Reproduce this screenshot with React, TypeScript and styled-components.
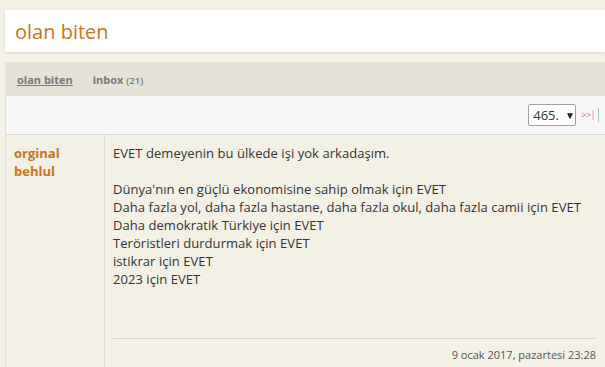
import React from 'react';
import styled, { createGlobalStyle } from 'styled-components';

const Global = createGlobalStyle`
  html, body {
    margin: 0;
    padding: 0;
    background: #f3f0e6;
    font-family: 'Open Sans', 'Liberation Sans', sans-serif;
    overflow: hidden;
  }
`;

const Page = styled.div`
  padding: 10px 0 0 5px;
`;

const Header = styled.div`
  height: 42px;
  background: #fff;
  box-shadow: 0 1px 2px rgba(0, 0, 0, 0.1);
  display: flex;
  align-items: center;
  padding-left: 10px;
  h1 {
    margin: 0;
    font-size: 20px;
    font-weight: 400;
    color: #d0701e;
  }
`;

const Tabs = styled.div`
  margin-top: 10px;
  height: 34px;
  background: #e5e2d7;
  display: flex;
  align-items: center;
  gap: 20px;
  padding-left: 12px;
`;

const Tab = styled.a<{ $active?: boolean }>`
  font-size: 11px;
  font-weight: 700;
  color: #7a7a7a;
  text-decoration: ${({ $active }) => ($active ? 'underline' : 'none')};
  small {
    font-size: 9.5px;
    font-weight: 600;
  }
`;

const Toolbar = styled.div`
  height: 38px;
  background: #f7f7f7;
  border-left: 1px solid #ddd;
  border-bottom: 1px solid #ddd;
  display: flex;
  align-items: center;
  justify-content: flex-end;
  padding-right: 6px;
`;

const Select = styled.div`
  width: 42px;
  height: 20px;
  border: 1px solid #a0a0a0;
  border-radius: 2px;
  background: #fff;
  display: flex;
  align-items: center;
  gap: 6px;
  padding-left: 4px;
  font-size: 13px;
  color: #333;
  span {
    font-size: 10px;
    color: #222;
  }
`;

const Last = styled.a`
  margin-left: 5px;
  font-size: 9px;
  color: #d07070;
  letter-spacing: -0.5px;
  padding-right: 3px;
  border-right: 1px solid #9cc3f0;
  line-height: 14px;
`;

const Post = styled.div`
  display: flex;
  border-left: 1px solid #ddd;
  min-height: 240px;
`;

const Author = styled.div`
  width: 90px;
  padding: 9px 0 0 8px;
  border-right: 1px solid #ddd;
  font-size: 13px;
  line-height: 18px;
  font-weight: 700;
  color: #d0701e;
`;

const Body = styled.div`
  flex: 1;
  padding: 9px 9px 0 8px;
  display: flex;
  flex-direction: column;
`;

const Content = styled.div`
  font-size: 13px;
  line-height: 18px;
  color: #333;
  letter-spacing: 0.05px;
  white-space: pre-line;
  height: 194px;
  border-bottom: 1px solid #d4d4d4;
`;

const Footer = styled.div`
  text-align: right;
  font-size: 11px;
  color: #555;
  padding-top: 8px;
`;

const text = `EVET demeyenin bu ülkede işi yok arkadaşım.

Dünya'nın en güçlü ekonomisine sahip olmak için EVET
Daha fazla yol, daha fazla hastane, daha fazla okul, daha fazla camii için EVET
Daha demokratik Türkiye için EVET
Teröristleri durdurmak için EVET
istikrar için EVET
2023 için EVET`;

export default function App() {
  return (
    <Page>
      <Global />
      <Header>
        <h1>olan biten</h1>
      </Header>
      <Tabs>
        <Tab $active>olan biten</Tab>
        <Tab>
          inbox <small>(21)</small>
        </Tab>
      </Tabs>
      <Toolbar>
        <Select>
          465. <span>▼</span>
        </Select>
        <Last>&gt;&gt;|</Last>
      </Toolbar>
      <Post>
        <Author>
          orginal
          <br />
          behlul
        </Author>
        <Body>
          <Content>{text}</Content>
          <Footer>9 ocak 2017, pazartesi 23:28</Footer>
        </Body>
      </Post>
    </Page>
  );
}
